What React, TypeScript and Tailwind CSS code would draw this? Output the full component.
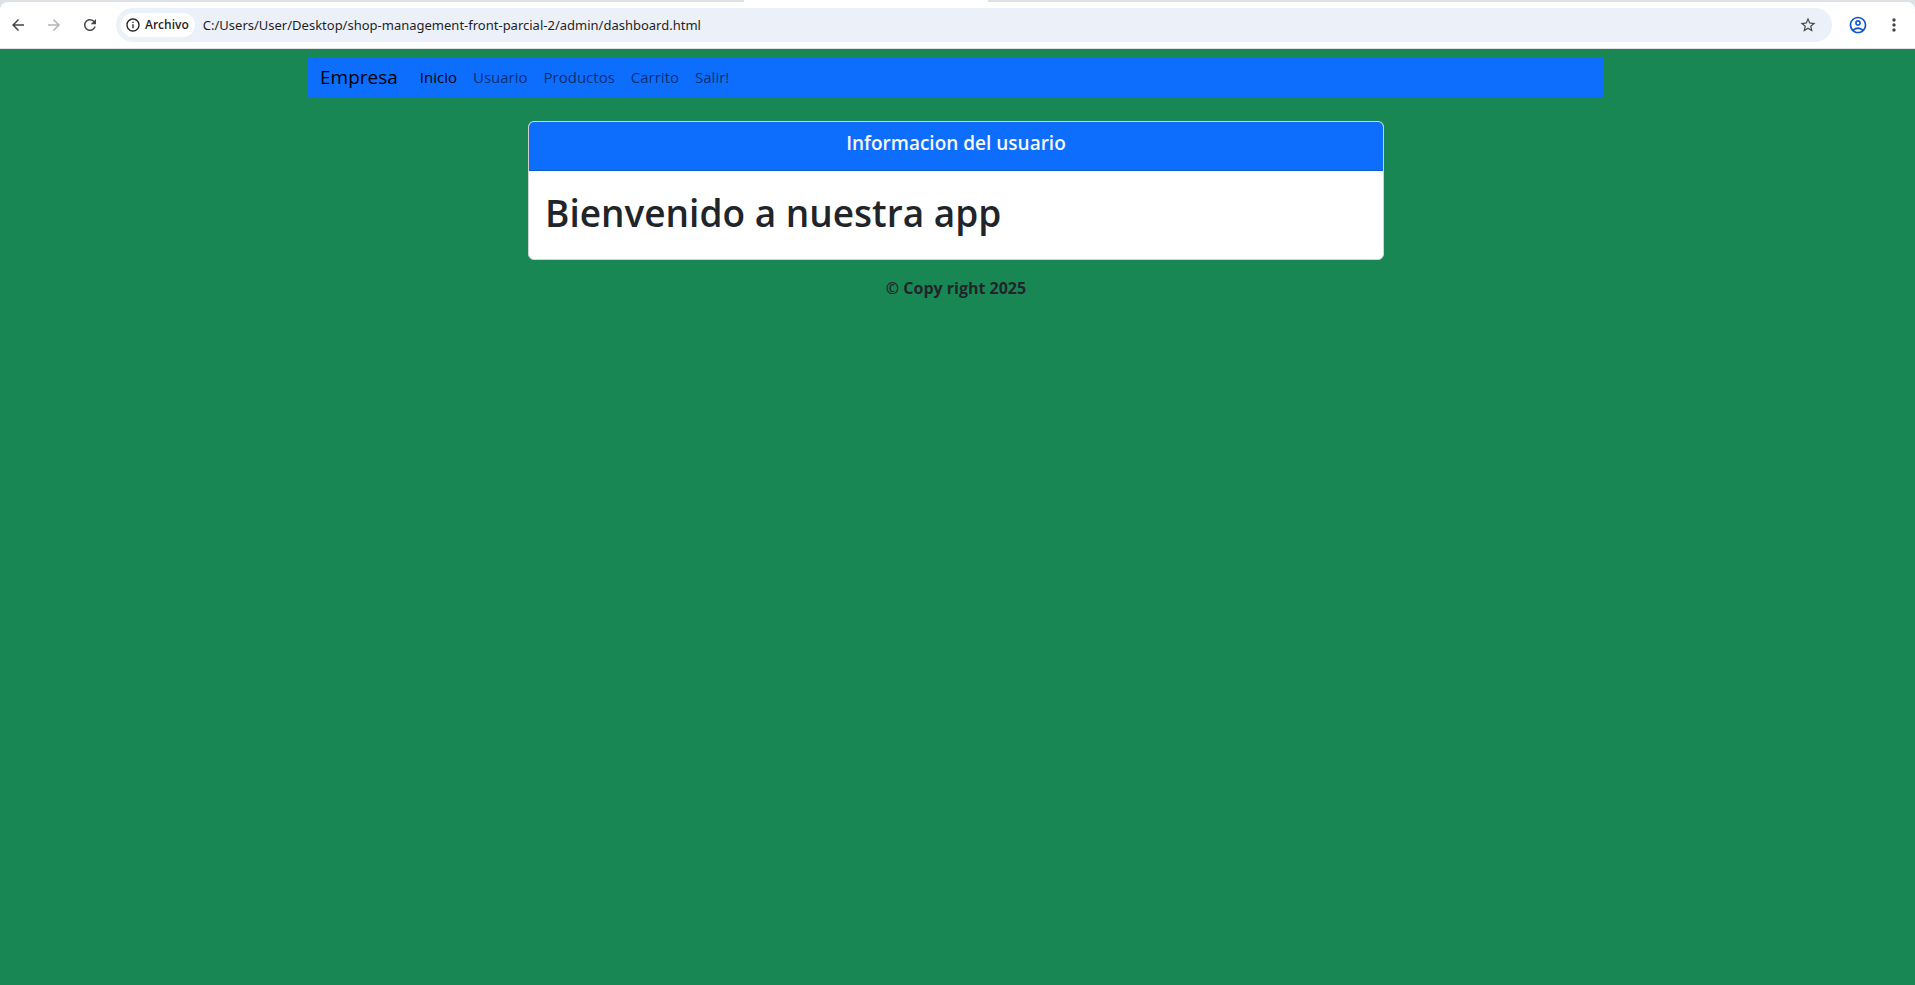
import {
  MdArrowBack,
  MdArrowForward,
  MdInfoOutline,
  MdMoreVert,
  MdOutlineAccountCircle,
  MdRefresh,
  MdStarBorder,
} from "react-icons/md";

const links = ["Usuario", "Productos", "Carrito", "Salir!"];

function BrowserBar() {
  return (
    <header className="bg-[#dee1e6] text-[#474747]">
      <div className="flex h-[2px]">
        <div className="w-[744px]" />
        <div className="w-[244px] bg-white" />
      </div>
      <div className="flex h-[47px] items-center rounded-t-lg border-b border-[#dfe1e4] bg-white">
        <div className="flex w-[116px] items-center gap-[18px] pl-[9px]">
          <button type="button" aria-label="Atrás">
            <MdArrowBack size={18} />
          </button>
          <button type="button" aria-label="Adelante" className="text-[#b4b4b4]" disabled>
            <MdArrowForward size={18} />
          </button>
          <button type="button" aria-label="Recargar">
            <MdRefresh size={18} />
          </button>
        </div>
        <div className="flex h-[34px] flex-1 items-center rounded-full bg-[#ecf0f9] pr-[15px] pl-[5px]">
          <button
            type="button"
            className="flex h-6 items-center gap-1 rounded-full bg-white pr-1.5 pl-1 text-[12px] font-semibold text-[#1f1f1f]"
          >
            <MdInfoOutline size={16} />
            Archivo
          </button>
          <input
            aria-label="Dirección"
            readOnly
            className="ml-2 flex-1 bg-transparent font-['Noto_Sans',sans-serif] text-[13px] text-[#1f1f1f] outline-none"
            value="C:/Users/User/Desktop/shop-management-front-parcial-2/admin/dashboard.html"
          />
          <button type="button" aria-label="Añadir a marcadores">
            <MdStarBorder size={18} />
          </button>
        </div>
        <div className="flex w-[83px] items-center gap-4 pl-4">
          <button type="button" aria-label="Perfil" className="text-[#0b57d0]">
            <MdOutlineAccountCircle size={20} />
          </button>
          <button type="button" aria-label="Menú">
            <MdMoreVert size={20} />
          </button>
        </div>
      </div>
    </header>
  );
}

export default function App() {
  return (
    <div className="flex min-h-screen flex-col bg-[#198754] font-['Open_Sans',sans-serif] text-[16px] leading-6 text-[#212529]">
      <BrowserBar />
      <div className="mx-auto w-full max-w-[1299px] pt-2 pr-[3px]">
        <nav className="flex items-center bg-[#0d6efd] pl-3 text-[15px]">
          <a href="#empresa" className="mr-3.5 text-[19px] text-black">
            Empresa
          </a>
          <a href="#inicio" className="p-2 text-black">
            Inicio
          </a>
          {links.map((label) => (
            <a key={label} href="#seccion" className="p-2 text-black/60">
              {label}
            </a>
          ))}
        </nav>
        <main className="mx-auto mt-6 max-w-[856px] overflow-hidden rounded-md border border-[#d2d2d2] bg-white">
          <h5 className="border-b border-[#0b5bd1] bg-[#0d6efd] px-4 pt-[9px] pb-[15px] text-center text-[19px] font-semibold text-[#f8f9fa]">
            Informacion del usuario
          </h5>
          <h1 className="px-4 pt-[18px] pb-[22px] text-[37px] leading-[48px] font-semibold">
            Bienvenido a nuestra app
          </h1>
        </main>
        <footer className="mt-4 text-center text-[16px] font-bold">© Copy right 2025</footer>
      </div>
    </div>
  );
}
